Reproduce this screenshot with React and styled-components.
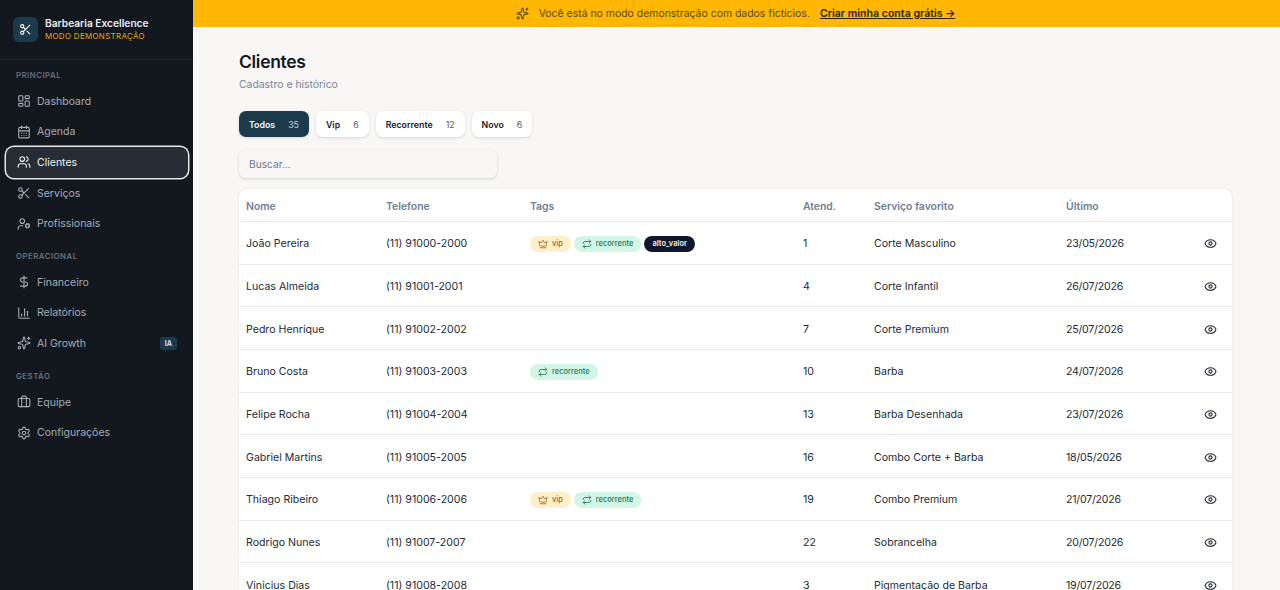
import React from "react";
import styled, { createGlobalStyle } from "styled-components";
import {
  LayoutDashboard,
  CalendarDays,
  Users,
  Scissors,
  UserCog,
  DollarSign,
  BarChart3,
  Sparkles,
  Briefcase,
  Settings,
  Crown,
  Repeat,
  Eye,
} from "lucide-react";

const GlobalStyle = createGlobalStyle`
  html, body {
    margin: 0;
    height: 100%;
    overflow: hidden;
    background: #f8f7f5;
    font-family: "Inter", "Noto Sans", sans-serif;
  }
  * { box-sizing: border-box; }
`;

const Shell = styled.div`
  display: flex;
  height: 590px;
  overflow: hidden;
`;

const Sidebar = styled.aside`
  width: 193px;
  flex: none;
  background: #13181f;
  display: flex;
  flex-direction: column;
`;

const Brand = styled.div`
  display: flex;
  align-items: center;
  gap: 7px;
  height: 60px;
  padding: 0 13px;
  border-bottom: 1px solid #222830;
`;

const BrandMark = styled.div`
  width: 25px;
  height: 25px;
  border-radius: 6px;
  background: #1b3a4b;
  color: #fff;
  display: flex;
  align-items: center;
  justify-content: center;
`;

const BrandName = styled.div`
  font-size: 10.2px;
  font-weight: 600;
  line-height: 14px;
  color: #eceef1;
`;

const BrandMode = styled.div`
  font-size: 7.9px;
  font-weight: 400;
  line-height: 13px;
  letter-spacing: 0.35px;
  color: #e3aa12;
`;

const Nav = styled.nav`
  padding: 9px 5px 0 6px;
  display: flex;
  flex-direction: column;
`;

const Section = styled.div`
  font-size: 7.8px;
  font-weight: 600;
  letter-spacing: 0.5px;
  line-height: 12px;
  color: #667080;
  padding: 0 10px;
  margin: ${(p) => (p.$first ? "0 0 5px" : "11px 0 5px")};
`;

const Item = styled.div`
  display: flex;
  align-items: center;
  gap: 6px;
  height: 30.6px;
  padding: 0 11px;
  border-radius: 8px;
  font-size: 10.5px;
  color: ${(p) => (p.$active ? "#f2f3f5" : "#a4acb8")};
  background: ${(p) => (p.$active ? "#282c34" : "transparent")};
  box-shadow: ${(p) => (p.$active ? "0 0 0 1.5px #e8e8e8" : "none")};
`;

const ItemLabel = styled.span`
  flex: 1;
`;

const AiBadge = styled.span`
  font-size: 7px;
  font-weight: 700;
  color: #d6e3ea;
  background: #1b3a4b;
  border-radius: 3px;
  padding: 2px 5px;
`;

const Main = styled.div`
  flex: 1;
  min-width: 0;
  display: flex;
  flex-direction: column;
`;

const Banner = styled.div`
  height: 27px;
  flex: none;
  padding-right: 2px;
  background: #ffb703;
  color: #5b4a12;
  display: flex;
  align-items: center;
  justify-content: center;
  gap: 10px;
  font-size: 10.45px;
`;

const BannerLink = styled.a`
  color: #2a2410;
  font-size: 10.6px;
  font-weight: 600;
  text-decoration: underline;
`;

const Content = styled.main`
  padding: 24px 46px 0;
`;

const Title = styled.h1`
  margin: 0;
  font-size: 17.5px;
  line-height: 22px;
  font-weight: 600;
  letter-spacing: -0.3px;
  color: #12161f;
`;

const Subtitle = styled.p`
  margin: 4px 0 0;
  font-size: 10.4px;
  line-height: 16px;
  color: #7a8698;
`;

const Filters = styled.div`
  display: flex;
  gap: 7px;
  margin-top: 18px;
`;

const Filter = styled.button`
  display: flex;
  align-items: center;
  gap: 13px;
  height: 26px;
  padding: 0 10px;
  border: 0;
  border-radius: 7px;
  font: inherit;
  font-size: 8.8px;
  font-weight: 600;
  color: ${(p) => (p.$active ? "#f3f6f8" : "#1a202b")};
  background: ${(p) => (p.$active ? "#1b3a4b" : "#fff")};
  box-shadow: 0 1px 3px rgba(20, 30, 40, 0.14);
`;

const Count = styled.span`
  font-weight: 400;
  opacity: 0.75;
`;

const Search = styled.input`
  display: block;
  width: 258px;
  height: 28px;
  margin-top: 13px;
  padding: 0 10px;
  border: 0;
  outline: 0;
  border-radius: 7px;
  background: #f8f7f5;
  font: inherit;
  font-size: 10.2px;
  box-shadow: 0 1px 3px rgba(20, 30, 40, 0.16);

  &::placeholder {
    color: #6d7889;
    opacity: 1;
  }
`;

const Table = styled.div`
  width: 993px;
  margin-top: 11px;
  background: #fff;
  border-radius: 8px 8px 0 0;
  box-shadow: 0 0 2px rgba(20, 30, 40, 0.14);
`;

const Row = styled.div`
  display: grid;
  grid-template-columns: 140px 144px 273px 71px 192px 1fr 28px;
  align-items: center;
  height: ${(p) => (p.$head ? "33px" : "42.66px")};
  padding: 2px 0 0 7px;
  border-bottom: 1px solid #e6e9ee;
  font-size: ${(p) => (p.$head ? "10.4px" : "10.6px")};
  color: ${(p) => (p.$head ? "#708096" : "#232a36")};
  font-weight: ${(p) => (p.$head ? 600 : 400)};
`;

const Tags = styled.div`
  display: flex;
  gap: 3px;
`;

const Tag = styled.span`
  display: flex;
  align-items: center;
  gap: 4px;
  height: 16px;
  padding: 0 8px;
  border-radius: 8px;
  font-size: 7.5px;
  font-weight: ${(p) => (p.$kind === "alto" ? 600 : 500)};
  color: ${(p) => ({ vip: "#a3661d", rec: "#1d7a57", alto: "#f4f5f7" })[p.$kind]};
  background: ${(p) => ({ vip: "#fdefc8", rec: "#d2f6e6", alto: "#11172b" })[p.$kind]};
`;

const DateCell = styled.div`
  letter-spacing: -0.22px;
`;

const EyeCell = styled.div`
  display: flex;
  color: #232a36;
`;

const menu = [
  {
    title: "PRINCIPAL",
    items: [
      ["Dashboard", LayoutDashboard],
      ["Agenda", CalendarDays],
      ["Clientes", Users, true],
      ["Serviços", Scissors],
      ["Profissionais", UserCog],
    ],
  },
  {
    title: "OPERACIONAL",
    items: [
      ["Financeiro", DollarSign],
      ["Relatórios", BarChart3],
      ["AI Growth", Sparkles],
    ],
  },
  {
    title: "GESTÃO",
    items: [
      ["Equipe", Briefcase],
      ["Configurações", Settings],
    ],
  },
];

const filters = [
  ["Todos", 35, true],
  ["Vip", 6],
  ["Recorrente", 12],
  ["Novo", 6],
];

const clients = [
  ["João Pereira", "(11) 91000-2000", ["vip", "rec", "alto"], 1, "Corte Masculino", "23/05/2026"],
  ["Lucas Almeida", "(11) 91001-2001", [], 4, "Corte Infantil", "26/07/2026"],
  ["Pedro Henrique", "(11) 91002-2002", [], 7, "Corte Premium", "25/07/2026"],
  ["Bruno Costa", "(11) 91003-2003", ["rec"], 10, "Barba", "24/07/2026"],
  ["Felipe Rocha", "(11) 91004-2004", [], 13, "Barba Desenhada", "23/07/2026"],
  ["Gabriel Martins", "(11) 91005-2005", [], 16, "Combo Corte + Barba", "18/05/2026"],
  ["Thiago Ribeiro", "(11) 91006-2006", ["vip", "rec"], 19, "Combo Premium", "21/07/2026"],
  ["Rodrigo Nunes", "(11) 91007-2007", [], 22, "Sobrancelha", "20/07/2026"],
  ["Vinicius Dias", "(11) 91008-2008", [], 3, "Pigmentação de Barba", "19/07/2026"],
];

const ClientTag = ({ kind }) => {
  if (kind === "vip")
    return (
      <Tag $kind="vip">
        <Crown size={10} />
        vip
      </Tag>
    );
  if (kind === "rec")
    return (
      <Tag $kind="rec">
        <Repeat size={10} />
        recorrente
      </Tag>
    );
  return <Tag $kind="alto">alto_valor</Tag>;
};

const App = () => {
  return (
    <Shell>
      <GlobalStyle />
      <Sidebar>
        <Brand>
          <BrandMark>
            <Scissors size={13} />
          </BrandMark>
          <div>
            <BrandName>Barbearia Excellence</BrandName>
            <BrandMode>MODO DEMONSTRAÇÃO</BrandMode>
          </div>
        </Brand>
        <Nav>
          {menu.map(({ title, items }, i) => (
            <React.Fragment key={title}>
              <Section $first={i === 0}>{title}</Section>
              {items.map(([name, Icon, active]) => (
                <Item key={name} $active={active}>
                  <Icon size={14} strokeWidth={1.9} />
                  <ItemLabel>{name}</ItemLabel>
                  {name === "AI Growth" && <AiBadge>IA</AiBadge>}
                </Item>
              ))}
            </React.Fragment>
          ))}
        </Nav>
      </Sidebar>
      <Main>
        <Banner>
          <Sparkles size={13} />
          <span>Você está no modo demonstração com dados fictícios.</span>
          <BannerLink>Criar minha conta grátis →</BannerLink>
        </Banner>
        <Content>
          <Title>Clientes</Title>
          <Subtitle>Cadastro e histórico</Subtitle>
          <Filters>
            {filters.map(([name, count, active]) => (
              <Filter key={name} $active={active}>
                {name}
                <Count>{count}</Count>
              </Filter>
            ))}
          </Filters>
          <Search placeholder="Buscar..." />
          <Table>
            <Row $head>
              <div>Nome</div>
              <div>Telefone</div>
              <div>Tags</div>
              <div>Atend.</div>
              <div>Serviço favorito</div>
              <div>Último</div>
              <div />
            </Row>
            {clients.map(([name, phone, tags, visits, service, last]) => (
              <Row key={name}>
                <div>{name}</div>
                <div>{phone}</div>
                <Tags>
                  {tags.map((t) => (
                    <ClientTag key={t} kind={t} />
                  ))}
                </Tags>
                <div>{visits}</div>
                <div>{service}</div>
                <DateCell>{last}</DateCell>
                <EyeCell>
                  <Eye size={13} />
                </EyeCell>
              </Row>
            ))}
          </Table>
        </Content>
      </Main>
    </Shell>
  );
};

export default App;
